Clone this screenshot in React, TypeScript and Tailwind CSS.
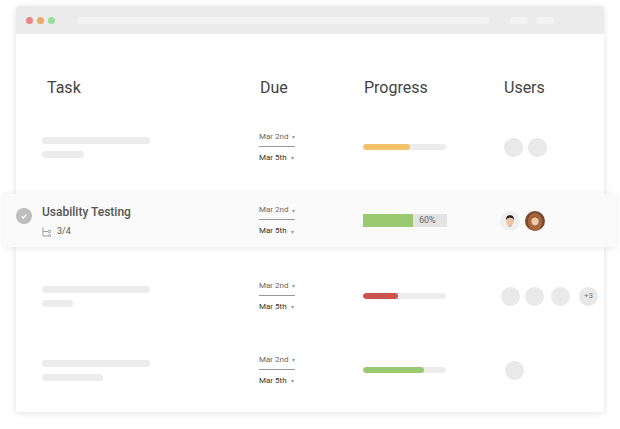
import React from "react";

const F = { fontFamily: "Roboto, 'Liberation Sans', sans-serif" };
const cols = "grid grid-cols-[217px_104px_137px_1fr] items-center";

function Dates() {
  return (
    <div className="flex flex-col text-[8px] text-[#666]">
      <div className="flex items-center gap-1 w-[36px] border-b border-[#999] pb-[3px]">
        <span className="whitespace-nowrap">Mar 2nd</span><span className="text-[6px] text-[#999]">▾</span>
      </div>
      <div className="flex items-center gap-1 pt-[5px]">
        <span className="whitespace-nowrap text-[#333]">Mar 5th</span><span className="text-[6px] text-[#999]">▾</span>
      </div>
    </div>
  );
}

function Bar({ w, color }: { w: number; color: string }) {
  return (
    <div className="w-[83px] h-[6px] rounded-full bg-[#ececec] overflow-hidden">
      <div className="h-full rounded-full" style={{ width: `${w}%`, background: color }} />
    </div>
  );
}

const Dot = () => <div className="w-[19px] h-[19px] rounded-full bg-[#e9e9e9]" />;

function SkelTask({ a, b }: { a: number; b: number }) {
  return (
    <div className="flex flex-col gap-[7px]">
      <div className="h-[7px] rounded-full bg-[#ececec]" style={{ width: a }} />
      <div className="h-[7px] rounded-full bg-[#ececec]" style={{ width: b }} />
    </div>
  );
}

function Man() {
  return (
    <svg width="20" height="20" viewBox="0 0 20 20">
      <clipPath id="c1"><circle cx="10" cy="10" r="10" /></clipPath>
      <g clipPath="url(#c1)">
        <rect width="20" height="20" fill="#efefef" />
        <path d="M3 21 Q10 14 17 21Z" fill="#fff" stroke="#ddd" strokeWidth="0.5" />
        <rect x="8.5" y="12" width="3" height="4" fill="#d9ae8e" />
        <ellipse cx="10" cy="10" rx="3.8" ry="4.6" fill="#e9c4a6" />
        <path d="M6 9 Q6 4 10 4.2 Q14 4 14 9 Q13 6.5 10 6.5 Q7 6.5 6 9Z" fill="#2a1c14" />
      </g>
    </svg>
  );
}

function Woman() {
  return (
    <svg width="20" height="20" viewBox="0 0 20 20">
      <clipPath id="c2"><circle cx="10" cy="10" r="10" /></clipPath>
      <g clipPath="url(#c2)">
        <rect width="20" height="20" fill="#7a4a30" />
        <ellipse cx="10" cy="11" rx="7" ry="9" fill="#a8673d" />
        <ellipse cx="10" cy="10" rx="3.6" ry="4.4" fill="#f0c9ab" />
        <path d="M6 9 Q7 4 10 4.5 Q13 4 14 9 Q12 6 10 6.5 Q8 6 6 9Z" fill="#9a5a34" />
      </g>
    </svg>
  );
}

export default function App() {
  return (
    <div className="w-[620px] h-[429px] bg-white relative overflow-hidden" style={F}>
      <div className="absolute left-[16px] top-[6px] w-[588px] h-[406px] bg-white shadow-[0_1px_6px_rgba(0,0,0,0.12)] rounded-[3px]">
        <div className="h-[28px] bg-[#ebebeb] rounded-t-[3px] flex items-center px-[10px]">
          <div className="flex gap-[4px]">
            <div className="w-[7px] h-[7px] rounded-full bg-[#e98787]" />
            <div className="w-[7px] h-[7px] rounded-full bg-[#efa766]" />
            <div className="w-[7px] h-[7px] rounded-full bg-[#97dc97]" />
          </div>
          <div className="ml-[22px] w-[412px] h-[7px] rounded-full bg-[#f3f3f3]" />
          <div className="ml-[21px] w-[18px] h-[7px] rounded-full bg-[#f3f3f3]" />
          <div className="ml-[8px] w-[18px] h-[7px] rounded-full bg-[#f3f3f3]" />
        </div>
        <div className={`${cols} pl-[26px] pt-[42px] text-[16px] text-[#444]`}>
          <div className="pl-[5px]">Task</div>
          <div className="pl-[1px]">Due</div>
          <div className="pl-[1px]">Progress</div>
          <div className="pl-[4px]">Users</div>
        </div>
      </div>
      <div className="absolute left-[16px] top-[112px] w-[588px] flex flex-col">
        <div className={`${cols} pl-[26px] h-[70px]`}>
          <SkelTask a={108} b={42} />
          <Dates />
          <Bar w={57} color="#f5c26b" />
          <div className="flex gap-[5px] pl-[4px]"><Dot /><Dot /></div>
        </div>
        <div className={`${cols} h-[53px] -mx-[12px] pl-[38px] pr-[12px] mt-[12px] bg-[#fafafa] shadow-[0_1px_8px_rgba(0,0,0,0.08)]`}>
          <div className="relative flex flex-col gap-[4px]">
            <div className="absolute -left-[26px] top-[5px] w-[16px] h-[16px] rounded-full bg-[#bdbdbd] flex items-center justify-center">
              <svg width="8" height="8" viewBox="0 0 8 8"><path d="M1.5 4.2 L3.3 6 L6.5 2.3" stroke="#fff" strokeWidth="1.2" fill="none" /></svg>
            </div>
            <div className="text-[12px] font-medium text-[#555]">Usability Testing</div>
            <div className="flex items-center gap-[5px] text-[9px] text-[#555]">
              <svg width="10" height="10" viewBox="0 0 10 10" fill="none" stroke="#888" strokeWidth="0.8"><path d="M1 0.5 V9 H6 M1 4.5 H6" /><circle cx="7.5" cy="4.5" r="1.3" /><circle cx="7.5" cy="8.7" r="1.1" /></svg>
              3/4
            </div>
          </div>
          <Dates />
          <div className="w-[84px] h-[13px] bg-[#e3e3e3] flex items-center">
            <div className="h-full w-[50px] bg-[#9bc96f]" />
            <span className="ml-[6px] text-[9px] text-[#666]">60%</span>
          </div>
          <div className="flex gap-[5px]"><Man /><Woman /></div>
        </div>
        <div className={`${cols} pl-[26px] h-[74px] mt-[12px]`}>
          <SkelTask a={108} b={31} />
          <Dates />
          <Bar w={42} color="#c9524a" />
          <div className="flex items-center gap-[5px] pl-[1px]">
            <Dot /><Dot /><div className="ml-[2px]"><Dot /></div>
            <div className="ml-[4px] w-[19px] h-[19px] rounded-full bg-[#e9e9e9] text-[8px] text-[#777] flex items-center justify-center">+3</div>
          </div>
        </div>
        <div className={`${cols} pl-[26px] h-[74px]`}>
          <SkelTask a={108} b={61} />
          <Dates />
          <Bar w={74} color="#9bc96f" />
          <div className="pl-[5px]"><Dot /></div>
        </div>
      </div>
    </div>
  );
}
